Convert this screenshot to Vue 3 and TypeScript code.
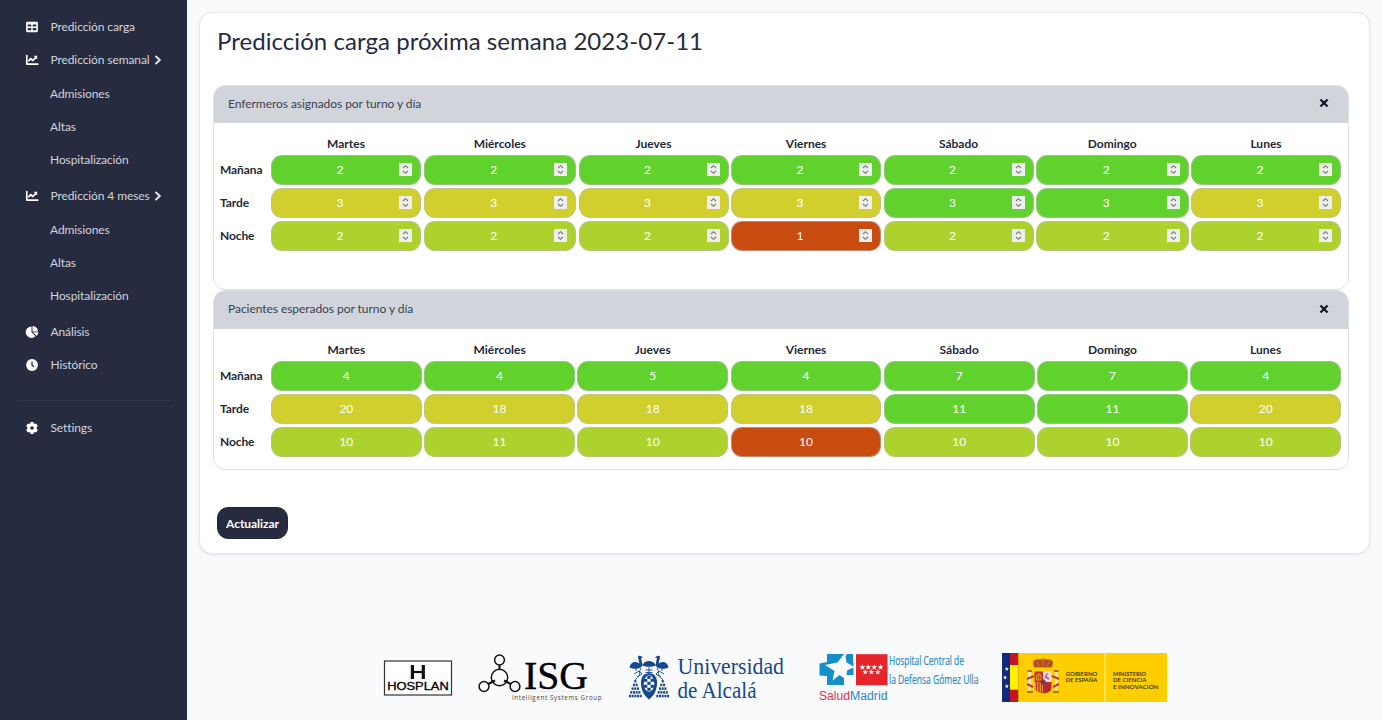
<script setup lang="ts">
interface NavItem {
  label: string
  icon?: 'table' | 'chart' | 'pie' | 'clock'
  children?: string[]
}
type Level = 'green' | 'yellow' | 'lime' | 'red'
interface Cell { value: number; level: Level }
interface Row { name: string; cells: Cell[] }
interface Panel { title: string; kind: 'inputs' | 'values'; rows: Row[] }

const nav: NavItem[] = [
  { label: 'Predicción carga', icon: 'table' },
  { label: 'Predicción semanal', icon: 'chart', children: ['Admisiones', 'Altas', 'Hospitalización'] },
  { label: 'Predicción 4 meses', icon: 'chart', children: ['Admisiones', 'Altas', 'Hospitalización'] },
  { label: 'Análisis', icon: 'pie' },
  { label: 'Histórico', icon: 'clock' },
]

const days = ['Martes', 'Miércoles', 'Jueves', 'Viernes', 'Sábado', 'Domingo', 'Lunes']
const levels: Record<string, Level[]> = {
  Mañana: ['green', 'green', 'green', 'green', 'green', 'green', 'green'],
  Tarde: ['yellow', 'yellow', 'yellow', 'yellow', 'green', 'green', 'yellow'],
  Noche: ['lime', 'lime', 'lime', 'red', 'lime', 'lime', 'lime'],
}
const row = (name: string, values: number[]): Row => ({
  name,
  cells: values.map((value, i) => ({ value, level: levels[name][i] })),
})

const panels: Panel[] = [
  {
    title: 'Enfermeros asignados por turno y día',
    kind: 'inputs',
    rows: [row('Mañana', [2, 2, 2, 2, 2, 2, 2]), row('Tarde', [3, 3, 3, 3, 3, 3, 3]), row('Noche', [2, 2, 2, 1, 2, 2, 2])],
  },
  {
    title: 'Pacientes esperados por turno y día',
    kind: 'values',
    rows: [row('Mañana', [4, 4, 5, 4, 7, 7, 4]), row('Tarde', [20, 18, 18, 18, 11, 11, 20]), row('Noche', [10, 11, 10, 10, 10, 10, 10])],
  },
]

const madridStars = [
  [862.3, 667.3], [868.2, 667.3], [874.2, 667.3], [880.6, 667.3],
  [865.2, 672], [871.3, 672], [877.8, 672],
]
const star = (cx: number, cy: number, r: number): string =>
  Array.from({ length: 10 }, (_, i) => {
    const a = -Math.PI / 2 + (i * Math.PI) / 5
    const k = i % 2 ? r * 0.42 : r
    return `${(cx + k * Math.cos(a)).toFixed(2)},${(cy + k * Math.sin(a)).toFixed(2)}`
  }).join(' ')

const tassels: number[][] = []
for (let r = 0; r < 5; r++) {
  for (let c = 0; c <= r; c++) {
    for (const cx of [635.3, 662.7]) tassels.push([cx - r * 1.35 + c * 2.7 - 1, 680 + r * 3.7])
  }
}
</script>

<template>
  <div class="page">
    <aside class="sidebar">
      <nav>
        <div v-for="item in nav" :key="item.label" class="group">
          <a class="item">
            <svg v-if="item.icon === 'table'" class="icon" viewBox="0 0 12 12">
              <path fill-rule="evenodd" d="M1.4.7h9.2c.8 0 1.3.5 1.3 1.2v8.2c0 .7-.5 1.2-1.3 1.2H1.4C.6 11.300.1 10.800.1 10.100V1.900C.1 1.200.6.700 1.400.700zM1.700 3.500v2h3.600V3.500zM6.700 3.500v2h3.600V3.500zM1.700 7v2.200h3.600V7zM6.700 7v2.200h3.600V7z" />
            </svg>
            <svg v-else-if="item.icon === 'chart'" class="icon" viewBox="0 0 12 12">
              <path d="M.8 1.500v8.600h11" class="stroke" />
              <path d="M2.800 6.600 4.800 4.700 6.800 6.500 9.600 3.700" class="stroke" />
              <path d="M7.600 1.800H11.200V5.400z" />
            </svg>
            <svg v-else-if="item.icon === 'pie'" class="icon" viewBox="0 0 12 12">
              <path d="M5.500.500A5.700 5.700 0 1 0 9.500 10.200L5.500 6.300z" />
              <path d="M6.500 0A5.600 5.600 0 0 1 12 5.400H6.500z" />
              <path d="M6.900 6.300H12.400A5.600 5.600 0 0 1 10.700 9.900z" />
            </svg>
            <svg v-else class="icon" viewBox="0 0 12 12">
              <circle cx="6" cy="6" r="5.900" />
              <path d="M6 2.700V6.200L8 7.600" class="hand" />
            </svg>
            <span>{{ item.label }}</span>
            <svg v-if="item.children" class="chevron" viewBox="0 0 8 10"><path d="M1.500 1 5.800 5 1.500 9" /></svg>
          </a>
          <div v-if="item.children" class="children">
            <a v-for="child in item.children" :key="child" class="item child">{{ child }}</a>
          </div>
        </div>
      </nav>
      <hr class="divider" />
      <a class="item">
        <svg class="icon" viewBox="0 0 12 12">
          <path fill-rule="evenodd" d="M4.500 0h3l.4 1.600.8.5 1.600-.5 1.500 2.600-1.200 1.100v1.400l1.200 1.100-1.500 2.600-1.600-.5-.8.5-.4 1.600h-3l-.4-1.600-.8-.5-1.600.5L.2 7.800l1.200-1.100V5.300L.2 4.200l1.500-2.600 1.600.5.8-.5zM6 4.200a1.800 1.800 0 1 0 0 3.600 1.800 1.800 0 0 0 0-3.600z" />
        </svg>
        <span>Settings</span>
      </a>
    </aside>

    <main class="main">
      <section class="card">
        <h1>Predicción carga próxima semana 2023-07-11</h1>
        <article v-for="panel in panels" :key="panel.title" class="panel" :class="panel.kind">
          <header>
            <span>{{ panel.title }}</span>
            <svg class="close" viewBox="0 0 10 10"><path d="M1.500 1.500 8.500 8.500M8.500 1.500 1.500 8.500" /></svg>
          </header>
          <div class="grid">
            <span></span>
            <b v-for="day in days" :key="day" class="day">{{ day }}</b>
            <template v-for="line in panel.rows" :key="line.name">
              <b class="shift">{{ line.name }}</b>
              <div v-for="(cell, i) in line.cells" :key="i" class="cell" :class="cell.level">
                <span>{{ cell.value }}</span>
                <svg v-if="panel.kind === 'inputs'" class="spin" viewBox="0 0 13 13">
                  <rect width="13" height="13" />
                  <path d="M4 5 6.500 2.700 9 5M4 8 6.500 10.300 9 8" />
                </svg>
              </div>
            </template>
          </div>
        </article>
        <button type="button">Actualizar</button>
      </section>

      <footer>
        <svg class="hosplan" viewBox="383 652 70 50">
          <rect x="384.500" y="661" width="67" height="34" fill="#fff" stroke="#333" stroke-width="1.200" />
          <path d="M412.400 665V679M423.300 665V679" stroke="#111" stroke-width="3.200" />
          <path d="M413 672H422.500" stroke="#111" stroke-width="2.200" />
          <text x="387.200" y="690.300" font-size="10" textLength="61.500" lengthAdjust="spacingAndGlyphs" class="sans heavy">HOSPLAN</text>
        </svg>

        <svg class="isg" viewBox="478 652 125 50">
          <g fill="none" stroke="#111" stroke-width="1.500">
            <circle cx="499.500" cy="677.500" r="8.200" />
            <circle cx="499.500" cy="660" r="4.900" />
            <circle cx="484" cy="686.500" r="4.900" />
            <circle cx="515" cy="686.500" r="4.900" />
            <path d="M499.500 665V669.500M488.300 684 495 680.500M510.700 684 504 680.500" stroke-width="2" />
          </g>
          <text x="524" y="688.500" font-size="40" textLength="64" lengthAdjust="spacingAndGlyphs" class="serif isgName">ISG</text>
          <path d="M524 691.500H589" stroke="#ddd" stroke-width=".5" />
          <text x="512" y="699.700" font-size="6.200" textLength="89.500" class="open small">Intelligent Systems Group</text>
        </svg>

        <svg class="uah" viewBox="628 652 158 50">
          <g fill="#16478f" stroke="#16478f">
            <path d="M629.500 667.500C630.500 662 635 660.500 639.500 663.500L638 657.500C637.500 655 641.500 655 643 658L641 657.800 642.500 665C641 669.500 634 669.500 629.500 667.500z" stroke="none" />
            <path d="M668.500 667.500C667.500 662 663 660.500 658.500 663.500L660 657.500C660.500 655 656.500 655 655 658L657 657.800 655.500 665C657 669.500 664 669.500 668.500 667.500z" stroke="none" />
            <path d="M643.500 663.500C645 660 653 660 654.500 663.500L656 665.500C652 667.300 646 667.300 642 665.500z" stroke="none" />
            <path d="M636 668V671M662 668V671M649 667V675M645.500 670H652.500M645.500 672.500H652.500M641 668C637 676 643 672 635 680M657 668C661 676 655 672 663 680M634 674 639 671 642 674 637 677M664 674 659 671 656 674 661 677" fill="none" stroke-width=".9" />
            <path d="M649 673.200C655 673.200 657.500 678 657 684.500C656.500 691 653.500 696 649 699.500C644.500 696 641.500 691 641 684.500C640.500 678 643 673.200 649 673.200z" stroke="none" />
          </g>
          <ellipse cx="649" cy="683.500" rx="5.300" ry="8.200" fill="#f9fafb" />
          <g fill="#16478f">
            <rect x="647.300" y="675.800" width="3.300" height="3" />
            <rect x="644" y="678.800" width="3.300" height="3" />
            <rect x="650.600" y="678.800" width="3.300" height="3" />
            <rect x="647.300" y="681.800" width="3.300" height="3" />
            <rect x="644" y="684.800" width="3.300" height="3" />
            <rect x="650.600" y="684.800" width="3.300" height="3" />
            <rect x="647.300" y="687.800" width="3.300" height="3" />
            <rect v-for="(t, i) in tassels" :key="i" :x="t[0]" :y="t[1]" width="2" height="2.500" />
            <text x="677.500" y="673.800" font-size="23.500" textLength="106.500" lengthAdjust="spacingAndGlyphs" class="serif">Universidad</text>
            <text x="677.500" y="697.600" font-size="23.500" textLength="79" lengthAdjust="spacingAndGlyphs" class="serif">de Alcalá</text>
          </g>
        </svg>

        <svg class="salud" viewBox="818 652 163 50">
          <path d="M827 654H844L845.500 656 847 654H853V662H853.500V675H844V685H827V676L819.500 675.500V663.500L827 662z" fill="#158fc9" />
          <path d="M845 652.800 846.500 662.500 854.500 667 847 670.500 846 679.500 839.500 675 832.500 680.500 834.500 671 825 665 837.500 662.500z" fill="#f9fafb" />
          <rect x="856" y="654.200" width="31.500" height="31" fill="#e52529" />
          <polygon v-for="(s, i) in madridStars" :key="i" :points="star(s[0], s[1], 3)" fill="#fff" />
          <text x="819" y="700" font-size="12.300" textLength="31" lengthAdjust="spacingAndGlyphs" class="sans" fill="#dc3545">Salud</text>
          <text x="850" y="700" font-size="12.300" textLength="37.500" lengthAdjust="spacingAndGlyphs" class="sans" fill="#2b86bd">Madrid</text>
          <text x="889" y="664.700" font-size="12.300" textLength="75" lengthAdjust="spacingAndGlyphs" class="open hospital">Hospital Central de</text>
          <text x="889" y="684.200" font-size="12.300" textLength="89.500" lengthAdjust="spacingAndGlyphs" class="open hospital">la Defensa Gómez Ulla</text>
        </svg>

        <svg class="gob" viewBox="1002 652 165 50">
          <rect x="1002" y="653" width="165" height="49" fill="#ffce00" />
          <rect x="1002" y="653" width="8" height="49" fill="#12297f" />
          <rect x="1010" y="653" width="8.300" height="49" fill="#c41524" />
          <rect x="1010" y="665" width="8.300" height="24.700" fill="#fff200" />
          <polygon v-for="s in [[1006.800, 669], [1005, 677.500], [1006.800, 686.300]]" :key="s[1]" :points="star(s[0], s[1], 2.200)" fill="#fff" />
          <path d="M1105 653V702" stroke="#fff0a8" stroke-width="1" />
          <path d="M1034.500 667C1031 658.500 1037 660 1043 659.500C1049 660 1055 658.500 1051.500 667z" fill="#c2412b" stroke="#a87513" stroke-width="1.200" />
          <path d="M1043 657.500V666M1037 662 1039 666M1049 662 1047 666M1041.500 659H1044.500" stroke="#b98a1b" stroke-width="1" />
          <path d="M1034.500 671.500H1043V682H1034.500z" fill="#c52f2c" />
          <path d="M1043 671.500H1051.500V682H1043z" fill="#eadbd5" />
          <path d="M1034.500 682H1043V693.500C1037 693 1034.500 691 1034.500 687z" fill="#e8a11d" />
          <path d="M1043 682H1051.500V687C1051.500 691 1049 693 1043 693.500z" fill="#b52a32" />
          <path d="M1036.500 682V690.500M1039 682V692M1041.500 682V693" stroke="#b52a32" stroke-width="1.200" />
          <path d="M1036.500 680V675H1041V680zM1038.700 673V680" stroke="#df9b27" fill="none" />
          <path d="M1047.500 673.500 1045.500 677 1049 679" stroke="#a85b88" stroke-width="1.500" fill="none" />
          <circle cx="1043" cy="682" r="2.300" fill="#334a87" stroke="#b52a32" />
          <g stroke="#eee5d7" stroke-width="2.800"><path d="M1029.700 672V690M1056.300 672V690" /></g>
          <g stroke="#bb3b28" stroke-width="2"><path d="M1027 679 1034 676M1027 684 1033 687M1052 676 1059 679M1053 687 1059 684" /></g>
          <g stroke="#9d7825" stroke-width="2"><path d="M1027.500 671H1032M1054 671H1058.500M1027 692H1033M1053 692H1059" /></g>
          <g class="gobText" font-size="6.300">
            <text x="1065.800" y="675.500" textLength="31.500" lengthAdjust="spacingAndGlyphs">GOBIERNO</text>
            <text x="1065.800" y="682" textLength="31.500" lengthAdjust="spacingAndGlyphs">DE ESPAÑA</text>
            <text x="1113" y="675.500" textLength="33" lengthAdjust="spacingAndGlyphs">MINISTERIO</text>
            <text x="1113" y="682" textLength="33.500" lengthAdjust="spacingAndGlyphs">DE CIENCIA</text>
            <text x="1113" y="688.500" textLength="45.500" lengthAdjust="spacingAndGlyphs">E INNOVACIÓN</text>
          </g>
        </svg>
      </footer>
    </main>
  </div>
</template>

<style>
body { margin: 0; background: #f9fafb; overflow: hidden; }
</style>

<style scoped>
* { box-sizing: border-box; }
.page { display: flex; height: 720px; background: #f9fafb; font-family: Lato, "Open Sans", sans-serif; color: #1f2937; font-size: 12px; }
.sidebar { width: 187px; flex: none; height: 720px; padding-top: 10px; background: #262b40; color: #d1d5db; }
.children { padding-bottom: 2.600px; }
.item { display: flex; align-items: center; height: 33.300px; padding-left: 26px; letter-spacing: -.1px; }
.item.child { padding-left: 50px; }
.icon { width: 12px; height: 12px; margin-right: 12.500px; fill: #fff; flex: none; overflow: visible; }
.stroke { fill: none; stroke: #fff; stroke-width: 1.700; stroke-linejoin: round; stroke-linecap: round; }
.hand { fill: none; stroke: #262b40; stroke-width: 1.300; }
.chevron { width: 8px; height: 10px; margin-left: 4px; fill: none; stroke: #e5e7eb; stroke-width: 1.900; }
.divider { height: 1px; border: 0; margin: 19px 17px 9.800px; background: #2e3650; }

.main { flex: 1; padding: 12px 12px 0; display: flex; flex-direction: column; }
.card { height: 542px; flex: none; border: 1px solid #e5e7eb; border-radius: 13px; background: #fff; box-shadow: 0 1px 3px rgba(38, 43, 64, .1); padding: 0 20px 0 13px; }
h1 { margin: 0; padding: 11px 0 0 4px; height: 72px; font-size: 24px; line-height: 34px; font-weight: 400; letter-spacing: .05px; color: #262b40; white-space: nowrap; }
.panel { border: 1px solid #dfe1e6; border-radius: 12px; overflow: hidden; }
.panel.inputs { height: 205px; }
.panel.values { height: 180px; }
header { display: flex; align-items: center; justify-content: space-between; height: 38px; margin: -1px -1px 0; padding: 0 20px 2px 15px; background: #d1d5db; color: #374151; letter-spacing: -.05px; }
.values header { height: 39px; }
.close { width: 10px; height: 10px; fill: none; stroke: #111827; stroke-width: 2.300; }
.grid { display: grid; column-gap: 2.500px; row-gap: 2.600px; padding: 13px 7px 0 6px; grid-template-columns: 48.500px 150fr 152.500fr 150fr 150fr 150fr 152.500fr 150fr; grid-template-rows: 16px repeat(3, 30.400px); }
.values .grid { grid-template-columns: 48.500px repeat(7, 1fr); }
.day { text-align: center; line-height: 16px; font-weight: 700; }
.shift { align-self: center; letter-spacing: -.1px; }
.cell { display: flex; align-items: center; padding: 0 9px; border: 1px solid rgba(185, 190, 190, .55); border-radius: 11px; color: #fff; }
.cell span { flex: 1; text-align: center; }
.inputs .cell { padding-right: 8px; }
.spin { width: 13px; height: 13px; flex: none; }
.spin rect { fill: #efefef; }
.spin path { fill: none; stroke: #777; stroke-width: 1.100; }
.green { background: #61d22d; }
.yellow { background: #d1cf2d; }
.lime { background: #add22e; }
.red { background: #c84b10; }
button { display: block; width: 71px; height: 32px; margin: 37px 0 0 4px; padding: 0; border: 1px solid #1f2438; border-radius: 11px; background: #262b40; color: #fff; font: 700 12px Lato, "Open Sans", sans-serif; letter-spacing: -.05px; }

footer { display: flex; margin: 98px 0 0 184px; height: 50px; }
footer svg { height: 50px; flex: none; overflow: visible; }
.hosplan { width: 70px; margin-right: 25px; }
.isg { width: 125px; margin-right: 25px; }
.uah { width: 158px; margin-right: 32px; }
.salud { width: 163px; margin-right: 21px; }
.gob { width: 165px; }
.sans { font-family: "Liberation Sans", Arial, sans-serif; }
.serif { font-family: "Liberation Serif", serif; }
.open { font-family: "Open Sans", sans-serif; }
.heavy { stroke: #000; stroke-width: .3; }
.isgName { stroke: #000; stroke-width: .4; }
.hospital { fill: #2d8dc0; stroke: #2d8dc0; stroke-width: .2; }
.small { fill: #444; }
.gobText { font-family: Lato, sans-serif; font-weight: 700; fill: #453b12; }
</style>
